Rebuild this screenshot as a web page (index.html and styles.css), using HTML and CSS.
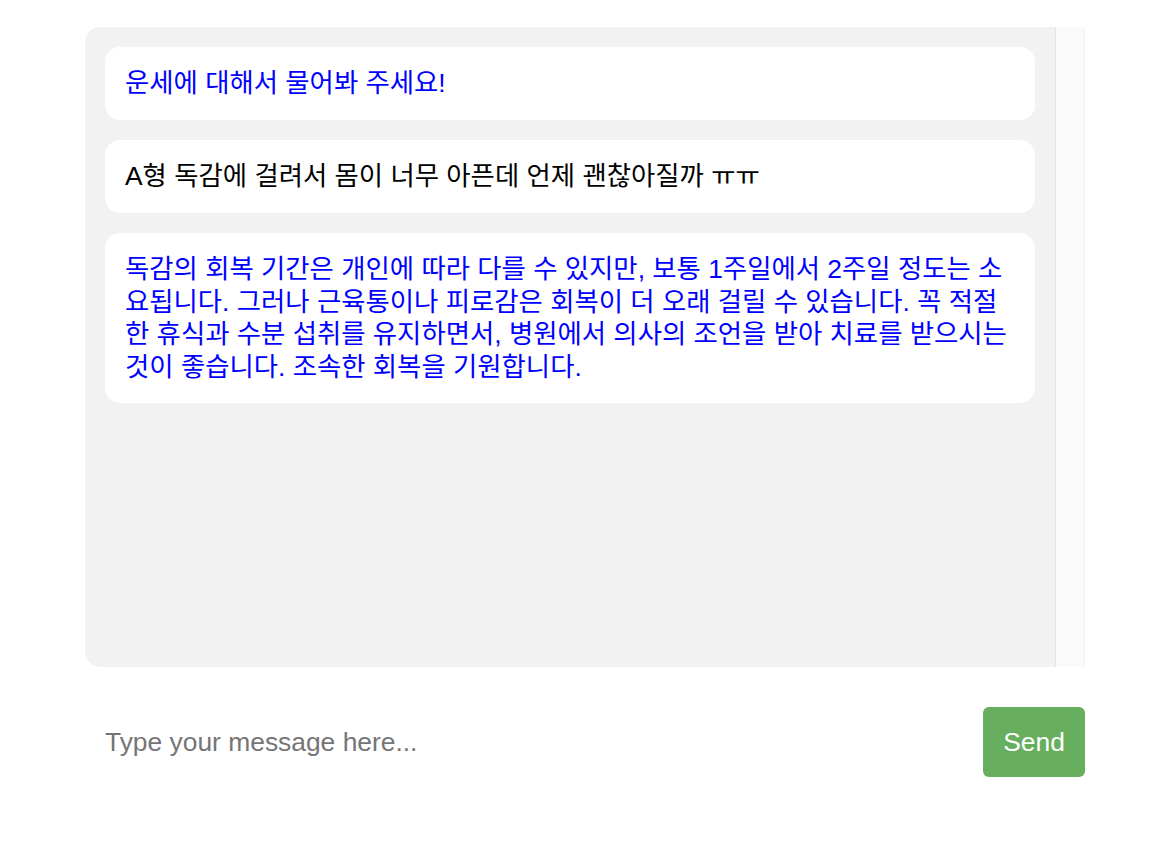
FILE: index.html
```html
<!DOCTYPE html>
<html lang="ko">
<head>
<meta charset="utf-8">
<title>Chat</title>
<link rel="stylesheet" href="styles.css">
</head>
<body>
<div class="app">
  <div class="chat-box">
    <div class="messages">
      <div class="message bot">운세에 대해서 물어봐 주세요!</div>
      <div class="message user">A형 독감에 걸려서 몸이 너무 아픈데 언제 괜찮아질까 ㅠㅠ</div>
      <div class="message bot">독감의 회복 기간은 개인에 따라 다를 수 있지만, 보통 1주일에서 2주일 정도는 소요됩니다. 그러나 근육통이나 피로감은 회복이 더 오래 걸릴 수 있습니다. 꼭 적절한 휴식과 수분 섭취를 유지하면서, 병원에서 의사의 조언을 받아 치료를 받으시는 것이 좋습니다. 조속한 회복을 기원합니다.</div>
    </div>
    <div class="scroll-track" aria-hidden="true"></div>
  </div>
  <div class="input-row">
    <input class="msg-input" type="text" placeholder="Type your message here...">
    <button class="send-btn" type="button">Send</button>
  </div>
</div>
</body>
</html>
```

FILE: styles.css
```css
html, body {
  margin: 0;
  padding: 0;
  background: #ffffff;
}

body {
  font-family: "Liberation Sans", "Noto Sans CJK KR", sans-serif;
  font-size: 26.4px;
}

.app {
  width: 1000px;
  margin: 27px 0 0 85px;
}

.chat-box {
  height: 640px;
  background: #f2f2f2;
  border-radius: 15px 0 0 15px;
  display: flex;
  overflow: hidden;
}

.messages {
  flex: 1;
  padding: 20px;
  display: flex;
  flex-direction: column;
  gap: 20.5px;
  overflow: hidden;
}

.scroll-track {
  width: 28px;
  flex: none;
  background: #fafafa;
  border-left: 1px solid #e6e6e6;
  border-right: 1px solid #efefef;
}

.message {
  background: #ffffff;
  border-radius: 15px;
  padding: 20px;
  line-height: 32.5px;
}

.message.bot {
  color: #0000ff;
}

.message.user {
  color: #000000;
}

.input-row {
  display: flex;
  align-items: center;
  gap: 10px;
  margin-top: 40px;
}

.msg-input {
  flex: 1;
  height: 70px;
  box-sizing: border-box;
  border: none;
  outline: none;
  padding: 0 20px;
  font-family: "Liberation Sans", "Noto Sans CJK KR", sans-serif;
  font-size: 26.4px;
  color: #000;
  background: #fff;
}

.msg-input::placeholder {
  color: #757575;
}

.send-btn {
  width: 102px;
  height: 70px;
  border: none;
  border-radius: 6px;
  background: #67ae5e;
  color: #ffffff;
  font-family: "Liberation Sans", sans-serif;
  font-size: 26.4px;
  padding: 0;
  cursor: pointer;
}
```
